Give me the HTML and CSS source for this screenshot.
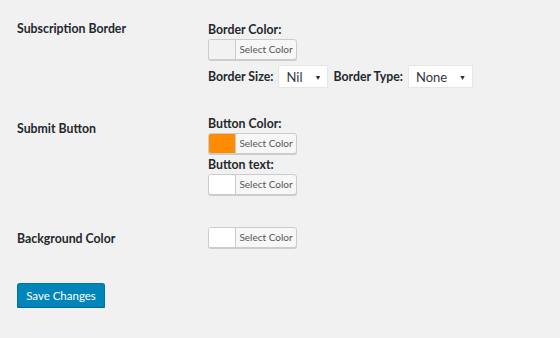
FILE: index.html
```html
<!DOCTYPE html>
<html>
<head>
<meta charset="utf-8">
<link rel="stylesheet" href="styles.css">
</head>
<body>
<div class="page">
  <div class="row row-border">
    <div class="th">Subscription Border</div>
    <div class="td">
      <div class="flabel">Border Color:</div>
      <div class="picker"><span class="swatch swatch-empty"></span><span class="pick-text">Select Color</span></div>
      <div class="inline-fields">
        <span class="flabel">Border Size:</span>
        <div class="select sel-size"><span>Nil</span><span class="arrow">▼</span></div>
        <span class="flabel">Border Type:</span>
        <div class="select sel-type"><span>None</span><span class="arrow">▼</span></div>
      </div>
    </div>
  </div>
  <div class="row row-submit">
    <div class="th">Submit Button</div>
    <div class="td">
      <div class="flabel">Button Color:</div>
      <div class="picker"><span class="swatch swatch-orange"></span><span class="pick-text">Select Color</span></div>
      <div class="flabel flabel-second">Button text:</div>
      <div class="picker"><span class="swatch swatch-white"></span><span class="pick-text">Select Color</span></div>
    </div>
  </div>
  <div class="row row-bg">
    <div class="th">Background Color</div>
    <div class="td">
      <div class="picker"><span class="swatch swatch-white"></span><span class="pick-text">Select Color</span></div>
    </div>
  </div>
  <button class="save">Save Changes</button>
</div>
</body>
</html>
```
FILE: styles.css
```css
html, body {
  margin: 0;
  padding: 0;
  background: #f1f1f1;
}
body {
  font-family: Lato, "Noto Sans", sans-serif;
  font-size: 12.3px;
  color: #23282d;
}
.page {
  padding: 20px 0 0 17px;
}
.row {
  display: grid;
  grid-template-columns: 191px auto;
}
.th {
  font-weight: 700;
  line-height: 18px;
}
.flabel {
  font-weight: 700;
  line-height: 18px;
}
.row-border .td {
  padding-top: 1px;
}
.row-submit {
  margin-top: 27px;
}
.row-submit .th {
  padding-top: 5px;
}
.flabel-second {
  margin-top: 2px;
}
.row-bg {
  margin-top: 32px;
}
.row-bg .th {
  padding-top: 3px;
}
.picker {
  display: flex;
  width: 89px;
  height: 21px;
  box-sizing: border-box;
  border: 1px solid #cccccc;
  border-radius: 3px;
  box-shadow: 0 1px 0 #cccccc;
  background: #f7f7f7;
  overflow: hidden;
}
.swatch {
  width: 26px;
  border-right: 1px solid #cccccc;
  flex: none;
}
.swatch-empty { background: #f2f2f2; }
.swatch-white { background: #ffffff; }
.swatch-orange { background: #ff8c00; }
.pick-text {
  flex: 1;
  font-size: 10px;
  color: #555555;
  line-height: 19px;
  text-align: center;
}
.inline-fields {
  display: flex;
  align-items: center;
  margin-top: 5px;
  gap: 5px;
}
.select {
  display: flex;
  justify-content: space-between;
  align-items: center;
  height: 23px;
  box-sizing: border-box;
  background: #ffffff;
  border: 1px solid #e6e6e6;
  padding: 0 6px 0 7px;
  font-size: 13px;
  color: #32373c;
}
.sel-size { width: 50px; }
.sel-type { width: 65px; }
.arrow {
  font-size: 7px;
  color: #23282d;
}
.save {
  display: block;
  margin-top: 35px;
  width: 88px;
  height: 25px;
  padding: 0;
  font-family: Lato, "Noto Sans", sans-serif;
  font-size: 11.5px;
  color: #ffffff;
  background: #0085ba;
  border: 1px solid #0073aa;
  border-bottom-color: #006799;
  border-radius: 3px;
  box-shadow: 0 1px 0 #006799;
}
```
